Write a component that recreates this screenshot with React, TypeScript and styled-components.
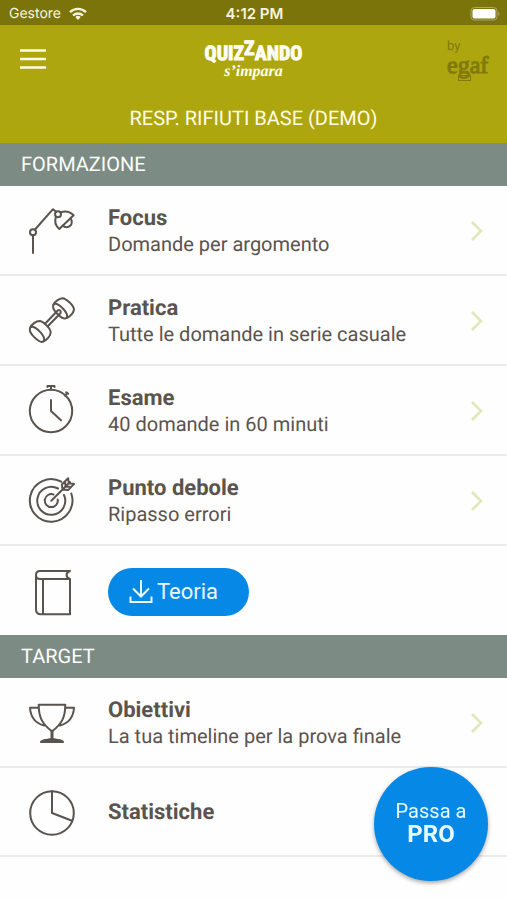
import React from "react";
import styled, { createGlobalStyle } from "styled-components";

const ink = "#5b534d";
const blue = "#0689e6";

const GlobalStyle = createGlobalStyle`
  * { box-sizing: border-box; }
  body {
    margin: 0;
    background: #fefefe;
    color: ${ink};
    font-family: Roboto, "Liberation Sans", sans-serif;
    text-rendering: geometricPrecision;
  }
  button { font: inherit; border: 0; padding: 0; cursor: pointer; }
`;

const Screen = styled.div`
  min-height: 100vh;
`;

const StatusBar = styled.div`
  display: grid;
  grid-template-columns: 1fr auto 1fr;
  align-items: center;
  height: 25px;
  padding: 2px 7px 0 9px;
  background: #7a740b;
  color: #f6f3dc;
  font-family: Inter, sans-serif;
  font-size: 14px;
`;

const Carrier = styled.div`
  display: flex;
  align-items: center;
  gap: 8px;
`;

const Clock = styled.span`
  font-size: 15px;
  font-weight: 600;
`;

const Battery = styled.svg`
  justify-self: end;
`;

const Header = styled.header`
  height: 118px;
  background: #aea60f;
  color: #fffde6;
`;

const HeaderBar = styled.div`
  display: grid;
  grid-template-columns: 1fr auto 1fr;
  align-items: center;
  height: 68px;
  padding: 0 20px;
`;

const MenuButton = styled.button`
  display: flex;
  width: 26px;
  background: none;
  color: inherit;
`;

const Brand = styled.div`
  display: grid;
  justify-items: center;
  padding-top: 4px;
  color: #fffef4;
`;

const BrandName = styled.span`
  font: 700 20px/22px "Liberation Sans Narrow", "Roboto Condensed", Roboto, sans-serif;
  -webkit-text-stroke: 1px currentColor;
`;

const RaisedZ = styled.span`
  position: relative;
  top: -5px;
`;

const BrandTag = styled.span`
  font: italic 700 16px/16px "Liberation Serif", serif;
`;

const Publisher = styled.div`
  display: grid;
  justify-self: end;
  width: 40px;
  color: #81790c;
`;

const PublisherBy = styled.span`
  font-size: 13px;
  line-height: 14px;
`;

const PublisherName = styled.span`
  position: relative;
  font: 400 24px/24px "Liberation Serif", serif;
  -webkit-text-stroke: 1px currentColor;

  &::after {
    content: "";
    position: absolute;
    left: 11px;
    bottom: -3px;
    width: 11px;
    height: 4px;
    border: 1px solid currentColor;
  }
`;

const Course = styled.h1`
  margin: 0;
  padding-top: 13px;
  text-align: center;
  font-size: 20px;
  line-height: 24px;
  font-weight: 400;
`;

const SectionTitle = styled.h2`
  margin: 0;
  padding: 0 21px;
  background: #7d8b85;
  color: #fbfdfb;
  font-size: 20px;
  line-height: 43px;
  font-weight: 400;
`;

const Row = styled.div`
  display: grid;
  grid-template-columns: 48px 1fr auto;
  column-gap: 32px;
  align-items: center;
  width: 100%;
  height: 90px;
  padding: 2px 23px 0 28px;
  border-bottom: 2px solid #ebebeb;
`;

const LinkRow = styled(Row)`
  color: inherit;
  text-decoration: none;
`;

const PlainRow = styled(Row)`
  height: 89px;
  border-bottom-width: ${(p: { $last?: boolean }) => (p.$last ? "0" : "2px")};
`;

const RowText = styled.span`
  display: grid;
`;

const RowTitle = styled.strong`
  font-size: 22px;
  line-height: 26px;
  font-weight: 700;
`;

const RowNote = styled.span`
  font-size: 20px;
  line-height: 24px;
`;

const LineIcon = styled.svg`
  overflow: visible;
  fill: none;
  stroke: ${ink};
  stroke-width: 2;
  stroke-linecap: round;
  stroke-linejoin: round;
`;

const TheoryButton = styled.button`
  display: flex;
  align-items: center;
  justify-self: start;
  gap: 4px;
  height: 48px;
  padding: 0 31px 0 21px;
  border-radius: 24px;
  background: ${blue};
  color: #eaf8ff;
  font-size: 22px;
`;

const ProButton = styled.button`
  position: fixed;
  right: 19px;
  bottom: 19px;
  width: 114px;
  height: 114px;
  border-radius: 50%;
  background: ${blue};
  color: #eaf8ff;
  font-size: 20px;
  line-height: 20px;
  box-shadow: 0 2px 4px rgba(0, 0, 0, 0.35);
`;

const ProLabel = styled.strong`
  display: block;
  font-size: 24px;
  line-height: 26px;
`;

const Icon = ({ children }: { children: React.ReactNode }) => (
  <LineIcon width="48" height="48" viewBox="0 0 48 48" aria-hidden="true">
    {children}
  </LineIcon>
);

const Lamp = () => (
  <Icon>
    <path d="M5 28v18M7 22.500 25 2.200l3.200 2.600M32.500 5.500C37 3.700 42 4.800 45.600 8.300L31.300 22C27.300 18.500 26.400 14 28 9.600" />
    <circle cx="5" cy="25.200" r="3" />
    <circle cx="30" cy="7.200" r="3" />
    <path d="M42.400 11.500a5 5 0 0 1-7.500 7" />
  </Icon>
);

const Dumbbell = () => (
  <Icon>
    <path d="M25.500 7.500C27 4.500 31 1.500 34.500 1.300 38 1.500 45.500 8 46 12.500 45.500 16 42 20 38.500 21" />
    <path d="M25.500 7.500c-1.500 2.500.8 6.300 3.700 9.200 3.300 3.300 7.300 6 9.300 4.300 1.900-1.800-.2-6-3.400-9.300-3.200-3.200-7.500-6-9.600-4.200Z" />
    <path d="M2.300 30.500C3.500 27.500 8 24 11.500 24 15 24.200 22.300 31 22.700 35.200 22.500 39 19 43 15.500 44.300" />
    <path d="M2.300 30.500c-1.500 2.500.8 6.500 3.700 9.400 3.300 3.300 7.500 6.200 9.500 4.400 1.900-1.800-.2-6.100-3.400-9.400-3.200-3.200-7.700-6.200-9.800-4.400Z" />
    <path d="M17 26.800 30 13.300c1.800-.8 3.400.7 2.600 2.700L19.600 29.500" />
  </Icon>
);

const Stopwatch = () => (
  <Icon>
    <circle cx="23" cy="24" r="21.200" />
    <path d="M23 13v11l10 9.300M23 2.500V-1M19.500-1h7M19.500-1v1M26.500-1v1M37 8.500l2.500-2.500M38.200 5.200l2 1.600" />
  </Icon>
);

const Target = () => (
  <Icon>
    <path d="M33.300 4.700A21.300 21.300 0 1 0 43.300 16.500M30 11.500A14 14 0 1 0 36 18M25.500 17.500A6.500 6.500 0 1 0 29.700 22.500" />
    <path d="M23.300 23.700 42 5M34.500 12.500l-.6-5 6.200-6.200.7 4.900 5.300.7-6 6.200-5.600-.6M37.500 9.500l-.4-5M37.500 9.500l5.300.4" />
  </Icon>
);

const Book = () => (
  <Icon>
    <path d="M42 3H12C9.500 3 8 4.800 8 7v34.300c0 3 1.800 5 4.700 5H42V11H12c-2.500 0-4-1.500-4-4M42 3c-4.500 1.500-4.500 6.500 0 8M15 11v35" />
  </Icon>
);

const Trophy = () => (
  <Icon>
    <path d="M10.700 5.700h26.600C37.300 18 34 25 24 32.300 14 25 10.700 18 10.700 5.700ZM10.900 8.700H2C2.500 17 7 24 16 26.500M37.100 8.700H46C45.500 17 41 24 32 26.500" />
    <path d="M24 32.300V40" strokeWidth="3" />
    <path d="M13 43h22c-1-2-4-1.800-6.500-2.200-2-1.100-7-1.100-9 0C17 41.200 14 41 13 43Z" fill="#5b534d" />
  </Icon>
);

const Pie = () => (
  <Icon>
    <circle cx="24" cy="24" r="21.800" />
    <path d="M24 2v22l20 7.700" />
  </Icon>
);

const Chevron = () => (
  <svg width="14" height="22" viewBox="0 0 14 22" fill="none" stroke="#e0e8b9" strokeWidth="2.500" aria-hidden="true">
    <path d="m2 2 9 9-9 9" />
  </svg>
);

type EntryProps = { icon: React.ReactNode; title: string; note: string };

const Entry = ({ icon, title, note }: EntryProps) => (
  <LinkRow as="a" href="#">
    {icon}
    <RowText>
      <RowTitle>{title}</RowTitle>
      <RowNote>{note}</RowNote>
    </RowText>
    <Chevron />
  </LinkRow>
);

export default function App() {
  return (
    <Screen>
      <GlobalStyle />
      <StatusBar>
        <Carrier>
          Gestore
          <svg width="18" height="14" viewBox="0 0 18 14" fill="none" stroke="currentColor" strokeWidth="2.300" aria-hidden="true">
            <path d="M1 5.200a11.500 11.500 0 0 1 16 0M4 8.500a7.200 7.200 0 0 1 10 0" />
            <path d="m9 13-2.700-2.900a4 4 0 0 1 5.400 0Z" fill="currentColor" stroke="none" />
          </svg>
        </Carrier>
        <Clock>4:12 PM</Clock>
        <Battery width="30" height="14" viewBox="0 0 30 14" aria-label="Batteria">
          <rect x="1" y="0.500" width="26" height="12.500" rx="3.500" fill="none" stroke="#aaa572" />
          <rect x="2.500" y="2" width="23" height="9.500" rx="2" fill="#fff" />
          <path d="M28.300 4.500c1.600.8 1.600 3.700 0 4.500Z" fill="#aaa572" />
        </Battery>
      </StatusBar>
      <Header>
        <HeaderBar>
          <MenuButton aria-label="Menu">
            <svg width="26" height="22" viewBox="0 0 26 22" stroke="currentColor" strokeWidth="2.500" aria-hidden="true">
              <path d="M0 2.500h26M0 11h26M0 19.500h26" />
            </svg>
          </MenuButton>
          <Brand>
            <BrandName>QUIZ<RaisedZ>Z</RaisedZ>ANDO</BrandName>
            <BrandTag>s’impara</BrandTag>
          </Brand>
          <Publisher>
            <PublisherBy>by</PublisherBy>
            <PublisherName>egaf</PublisherName>
          </Publisher>
        </HeaderBar>
        <Course>RESP. RIFIUTI BASE (DEMO)</Course>
      </Header>
      <main>
        <SectionTitle>FORMAZIONE</SectionTitle>
        <Entry icon={<Lamp />} title="Focus" note="Domande per argomento" />
        <Entry icon={<Dumbbell />} title="Pratica" note="Tutte le domande in serie casuale" />
        <Entry icon={<Stopwatch />} title="Esame" note="40 domande in 60 minuti" />
        <Entry icon={<Target />} title="Punto debole" note="Ripasso errori" />
        <PlainRow $last>
          <Book />
          <TheoryButton>
            <svg width="24" height="26" viewBox="0 0 24 26" fill="none" stroke="currentColor" strokeWidth="2" aria-hidden="true">
              <path d="M12 1v16M4 9.500l8 8 8-8M1.500 17.500V23h21v-5.500" />
            </svg>
            Teoria
          </TheoryButton>
        </PlainRow>
        <SectionTitle>TARGET</SectionTitle>
        <Entry icon={<Trophy />} title="Obiettivi" note="La tua timeline per la prova finale" />
        <PlainRow>
          <Pie />
          <RowTitle>Statistiche</RowTitle>
        </PlainRow>
      </main>
      <ProButton>
        Passa a
        <ProLabel>PRO</ProLabel>
      </ProButton>
    </Screen>
  );
}
